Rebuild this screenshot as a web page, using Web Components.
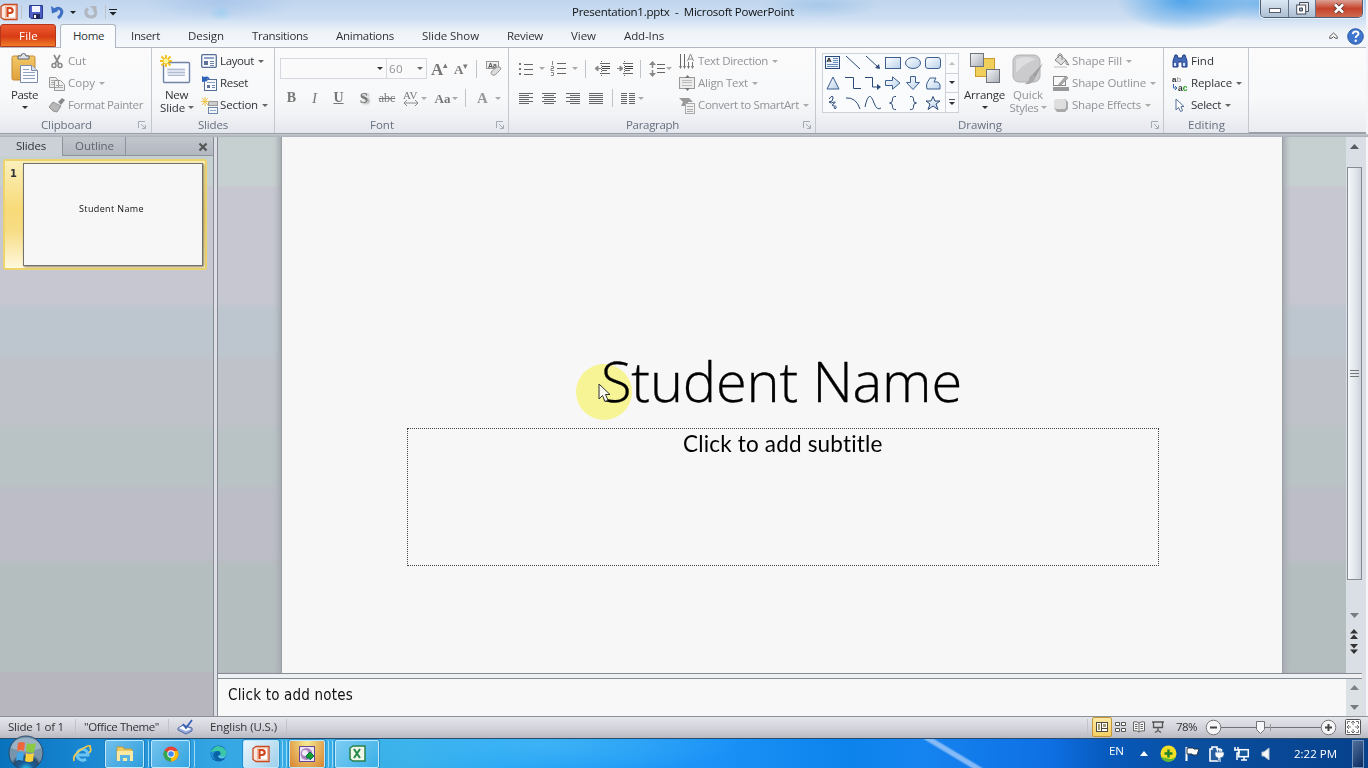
<!DOCTYPE html>
<html lang="en"><head><meta charset="utf-8"><title>Presentation1.pptx - Microsoft PowerPoint</title>
<style>html,body{margin:0;width:1368px;height:768px;overflow:hidden;background:#f4f5f8}body{font:11.5px/16px "Open Sans","Noto Sans",sans-serif;color:#303338}</style></head>
<body><office-app></office-app>
<script>
const base='*{box-sizing:border-box}.row{display:flex;align-items:center;flex:none}.row>*,.col>*{flex:none}.col{display:flex;flex-direction:column}';
function define(tag,css,html){customElements.define(tag,class extends HTMLElement{constructor(){super();this.attachShadow({mode:'open'}).innerHTML='<style>'+base+css+'</style>'+(typeof html==='function'?html(this):html);}});}

const grad='<defs><linearGradient id="b" x2="1" y2="1"><stop stop-color="#fff"/><stop offset="1" stop-color="#b9d2ea"/></linearGradient><linearGradient id="y" x2="0" y2="1"><stop stop-color="#f3c868"/><stop offset="1" stop-color="#e0a23c"/></linearGradient><linearGradient id="s" x2="1" y2="1"><stop stop-color="#f4f5f7"/><stop offset="1" stop-color="#a9adb5"/></linearGradient></defs>';
const lines=(x1,x2,ys,c='#666')=>ys.map(y=>`<path d="M${x1} ${y}.5H${x2}" stroke="${c}"/>`).join('');
const K='fill="none" stroke="#2c4a78"';
const icons={
ppt:[18,18,'<path d="M1 3.500L4 1.500h13v15H4l-3-2z" fill="#fbe9e0" stroke="#c8481f" stroke-width="1.300"/><path d="M5.500 3h10v12h-10z" fill="#fff" stroke="#e9a084" stroke-width=".7"/><path d="M7.500 14V5H10q2.700.2 2.700 2.500T10 10H7.500" fill="none" stroke="#d2441a" stroke-width="2.200"/>'],
save:[14,14,'<path d="M.5.5h13v13H2L.5 12z" fill="#4d5fc4" stroke="#2c3a8e"/><path d="M3 1h8v6H3z" fill="#f2f5ff"/><path d="M4 9h7v5H4z" fill="#20275c"/><path d="M5 10h2v3H5z" fill="#fff"/>'],
undo:[14,14,'<path d="M4 5c3-3.500 8-1 6.500 3.500-.7 2.200-2 3.500-3.500 4.500" fill="none" stroke="#3f6fc4" stroke-width="3"/><path d="M0 1l1 7.500L7.500 6z" fill="#3f6fc4"/>'],
redo:[14,14,'<path d="M4 3.500C0 6.500 2 12 7 12s6.500-5 2.500-8" fill="none" stroke="#b3b7bf" stroke-width="3"/><path d="M5.500 1h7v6z" fill="#b3b7bf"/>'],
qat:[8,8,'<path d="M0 1.500h8" stroke="#222"/><path d="M.5 4h7L4 7.500z" fill="#222"/>'],
paste:[28,31,'<rect x="1" y="3" width="23" height="24" rx="1.500" fill="url(#y)" stroke="#c18a38"/><path d="M7 6V3h3q0-2.500 2.500-2.500T15 3h3v3z" fill="#dfe2e6" stroke="#5d6470"/><path d="M9.500 12.500h11l6 5v12h-17z" fill="#fbfcff" stroke="#7b8ba9"/><path d="M20.500 12.500v5h6" fill="#d3deee" stroke="#7b8ba9"/>'+lines(12,18,[16],'#8fa2c2')+lines(12,24,[19,22,25],'#8fa2c2')],
cut:[16,16,'<path d="M5 2l5 9M11 2L6 11" stroke="#888" stroke-width="1.700"/><circle cx="5" cy="12.500" r="2" fill="none" stroke="#888" stroke-width="1.500"/><circle cx="11" cy="12.500" r="2" fill="none" stroke="#888" stroke-width="1.500"/>'],
copy:[16,16,'<path d="M.5 2.500h6l3 3v7h-9zM5.500 5.500h6l4 4v6h-10z" fill="#eee" stroke="#999"/>'+lines(2,5,[5,7,9],'#aaa')+lines(7,14,[10,12],'#aaa')],
brush:[16,16,'<path d="M9 5l4-4 3 2-4 5z" fill="#888"/><path d="M4 5l8 4-4 6-4-1-4-4z" fill="#b8b8b8" stroke="#929292"/>'],
newslide:[32,30,'<rect x="4.500" y="8.500" width="26" height="20" rx="1" fill="#fafbfe" stroke="#7183a6" stroke-width="1.400"/><path d="M8 14h18v7H8z" fill="#dde2ee"/>'+lines(9,26,[15,18,21],'#b3bdd0')+'<path d="M7 1v12M1 7h12M2.500 2.500l9 9M11.500 2.500l-9 9" stroke="#f2be1c" stroke-width="1.900"/><circle cx="7" cy="7" r="2.500" fill="#fff79b"/>'],
layout:[16,14,'<rect x=".7" y=".7" width="14.600" height="12.600" rx="1" fill="#f7f9fc" stroke="#566f96" stroke-width="1.300"/><path d="M3 3h10v2H3z" fill="#8da4c6"/><path d="M3 7h4v4H3z" fill="#5f7397"/>'+lines(9,13,[7,9,11],'#6f86ad')],
reset:[16,16,'<rect x="3.500" y="4.500" width="12" height="11" fill="#f7f9fc" stroke="#566f96"/>'+lines(6,14,[7],'#8da4c6')+'<path d="M6 10h3v3H6z" fill="#5f7397"/>'+lines(11,14,[10,12],'#6f86ad')+'<path d="M1 7V1l2 1q5-2 6 3-3-2-4-.5L7 6z" fill="#2d62bd"/>'],
section:[17,17,'<rect x="7.500" y="4.500" width="9" height="4" fill="#ccc" stroke="#999"/><rect x="7.500" y="10.500" width="9" height="6" fill="#f3f6fb" stroke="#6f86ad"/>'+lines(9,15,[13],'#8da4c6')+'<path d="M4 0v9M0 4.500h8M1 1l6 7M7 1L1 8" stroke="#f0c445"/>'],
clear:[18,17,'<rect x="1.500" y="1.500" width="12" height="7" fill="#eee" stroke="#999"/><text x="3" y="8" font-size="7" font-weight="700" fill="#555" font-family="Liberation Sans">Aa</text><path d="M6 12l6-5q4-1 4 2l-6 6q-4 1-4-3z" fill="#ddd" stroke="#999"/>'],
bullets:[14,14,lines(5,14,[2,7,12])+'<path d="M0 1h2v2H0zM0 6h2v2H0zM0 11h2v2H0z" fill="#777"/>'],
numbers:[15,15,lines(6,15,[2,7,12])+'<path d="M1.500 0v4M0 5.500h2.500v2H0v2h3M0 11.500h2.500v3H0" fill="none" stroke="#888"/>'],
outd:[16,15,lines(6,16,[2,12])+lines(8,16,[5,7],'#444')+lines(8,13,[9],'#666')+'<path d="M1 7.500L4 5v5zM4 7.500h3" fill="#888" stroke="#888"/><path d="M7.500 0v15" stroke="#666" stroke-dasharray="1 1"/>'],
ind:[16,15,lines(6,16,[2,12])+lines(8,16,[5,7],'#444')+lines(8,13,[9],'#666')+'<path d="M6 7.500L3 5v5zM0 7.500h3" fill="#888" stroke="#888"/><path d="M7.500 0v15" stroke="#666" stroke-dasharray="1 1"/>'],
spacing:[16,16,lines(8,16,[3,7,11])+'<path d="M3.500 1v6M3.500 9v6" stroke="#888" stroke-width="1.500"/><path d="M0 4h7L3.500 0zM0 12h7l-3.500 4z" fill="#888"/>'],
al:[14,13,lines(0,14,[1,5,9])+lines(0,10,[3,7,11])],ac:[14,13,lines(0,14,[1,5,9])+lines(2,12,[3,7,11])],ar:[14,13,lines(0,14,[1,5,9])+lines(4,14,[3,7,11])],aj:[14,13,lines(0,14,[1,3,5,7,9,11])],
cols:[14,13,lines(0,6,[1,3,5,7,9,11])+lines(8,14,[1,3,5,7,9,11])],
tdir:[16,16,'<path d="M1.500 1v14M5.500 1v14" stroke="#666"/><path d="M9.500 9v6M13.500 9v6" stroke="#777"/><path d="M8.500 8L11.500 1l3 7M9 6h5" fill="none" stroke="#888"/><path d="M0 13h3l-1.500 3zM4 13h3l-1.500 3zM8 13h3l-1.500 3zM12 13h3l-1.500 3z" fill="#777"/>'],
atext:[16,16,'<rect x=".5" y="2.500" width="15" height="11" fill="#ececec" stroke="#999"/>'+lines(3,13,[5,7,10],'#bbb')+'<path d="M6 3h5L8.500 0zM6 13h5l-2.500 3z" fill="#777"/>'],
smart:[16,17,'<path d="M0 1h10l4 4H9v4H2l2-4z" fill="#999"/><rect x="6.500" y="6.500" width="9" height="10" fill="#f1f1f1" stroke="#aaa"/>'+lines(8,14,[9,12,14],'#aaa')],
arrange:[30,30,grad+'<rect x="5.500" y="5.500" width="19" height="18" fill="#f0cf5a" stroke="#c89c30"/><rect x=".5" y=".5" width="13" height="13" fill="url(#s)" stroke="#6d727b"/><rect x="16.500" y="16.500" width="13" height="13" fill="url(#s)" stroke="#6d727b"/>'],
quick:[32,32,'<rect x="1" y="1" width="27" height="27" rx="6" fill="#cbcbce" stroke="#b2b2b5"/><path d="M4 5q8-4 20 0-12 4-20 14z" fill="#dedee0"/><path d="M31 9L20 21l3 3z" fill="#a0a0a0"/><path d="M20 21q-3 1-3 5l-4 4q8 1 10-6z" fill="#aaa"/>'],
fill:[16,16,'<path d="M7 2l6 5-5 5-6-5z" fill="#ddd" stroke="#888"/><path d="M5 5V2q2-3 4 0v5M13 7l3 5-3-1z" fill="none" stroke="#888"/><path d="M1 13h13v2H1z" fill="#ddd"/>'],
outline:[16,16,'<rect x=".5" y="1.500" width="12" height="9" fill="none" stroke="#888"/><path d="M6 9l7-8 2 2-7 7-3 1z" fill="#aaa" stroke="#888" stroke-width=".6"/><path d="M0 12h16v4H0z" fill="#999"/>'],
effects:[16,16,'<path d="M3 2h9l3 3v7l-3 3H4l-3-4z" fill="#aaa"/><rect x="1" y="2" width="12" height="10" rx="2.500" fill="#dedede"/>'],
find:[16,14,'<path d="M3 1h2l1 3h4l1-3h2l2 6v6h-5V8H6v5H1V7z" fill="#456ab5" stroke="#243e86"/><path d="M2 9h2v3H2zM11 9h2v3h-2z" fill="#dbe7ff"/>'],
replace:[17,18,'<text x="0" y="8" font-family="Liberation Sans" font-weight="700" font-size="8" fill="#333">a<tspan fill="#aaa">b</tspan></text><text x="6" y="17" font-family="Liberation Sans" font-weight="700" font-size="8.500" fill="#333">a<tspan fill="#25a025">c</tspan></text><path d="M1.500 10v4h3M3 12l2 2-2 2" fill="none" stroke="#3865ad"/>'],
select:[10,15,'<path d="M1 1v11l2.500-2.500 2 4 2-.8L6 8.500h3z" fill="#fff" stroke="#56709c"/>'],
launch:[8,8,'<path d="M.5 7V.5H7M3 3l4 4M7.500 4v3.500H4" fill="none" stroke="#a3abb5"/>'],
ie:[20,20,'<path d="M5 11h11a5.500 5.500 0 1 0-2 4" fill="none" stroke="#6cc4f2" stroke-width="3"/><path d="M2 17Q0 11 10 5T18 4q2 2-1 5" fill="none" stroke="#f2c94b" stroke-width="1.700"/>'],
folder:[18,16,'<path d="M1 3V1h6l1 2h8v11H1z" fill="#eecb60" stroke="#c19d3e"/><path d="M1 5h16v10H1z" fill="#fae9a2"/><path d="M4 15V9h10v6h-3v-3H7v3z" fill="#57b4e5"/>'],
chrome:[16,16,'<circle cx="8" cy="8" r="7.500" fill="#e94335"/><path d="M8 8L1.500 4.200A7.500 7.500 0 0 0 8 15.500z" fill="#34a853"/><path d="M8 15.500A7.500 7.500 0 0 0 14.800 5H8z" fill="#fbbc05"/><circle cx="8" cy="8" r="3.700" fill="#fff"/><circle cx="8" cy="8" r="2.800" fill="#4285f4"/>'],
edge:[17,17,'<circle cx="8.500" cy="8.500" r="8" fill="#0b62a5"/><path d="M1 6Q6-2 13 2.500q5 4 3 8-4 3-6 0 2-5-3-4.500Q3 6 2 10z" fill="#3ac7a8"/><path d="M7 6Q0 9 6 15 0 13 1 7z" fill="#1f91d6"/><path d="M10 10.500q3 2 6 0-1 3-4 3-4 0-4-3z" fill="#56c5ef"/>'],
cam:[16,16,'<rect x=".5" y=".5" width="15" height="15" fill="#ece7f4" stroke="#684795"/><circle cx="7.500" cy="8" r="6" fill="#ad83bd"/><circle cx="6" cy="7" r="3" fill="#f1ebf8"/><path d="M7 10l4-4 4 4-4 4v-2H8z" fill="#15a024" stroke="#075"/>'],
excel:[17,17,'<path d="M1 3l3-2h12v15H4l-3-2z" fill="#eef7e8" stroke="#26834a" stroke-width="1.500"/><path d="M5 4l6 9M11 4l-6 9" stroke="#27884b" stroke-width="2"/>'],
orb:[36,36,'<defs><radialGradient id="o" cy="1"><stop stop-color="#26d8ff"/><stop offset=".45" stop-color="#1a5d9b"/><stop offset=".8" stop-color="#294c6d"/><stop offset="1" stop-color="#7895ab"/></radialGradient></defs><circle cx="18" cy="18" r="17" fill="url(#o)" stroke="#28496a"/><path d="M3 13Q5 3 18 3t15 10Q18 20 3 13z" fill="#c2d7e4" opacity=".45"/><path d="M10 8q4-2 7 0l-1 8q-3-2-7 0z" fill="#ef663d"/><path d="M19 8q4 2 9 0l-2 9q-4 2-8-1z" fill="#8bc940"/><path d="M9 18q3-2 7 0l-1 8q-4-2-7 0z" fill="#43a7e8"/><path d="M18 18q4 2 8 0l-1 8q-4 2-8 0z" fill="#fbd13c"/>'],
spell:[17,16,'<path d="M1 9l5-3 9 3v3l-6 3-8-4z" fill="#9aaede" stroke="#5066a2"/><path d="M2 9l4-2 8 3-5 2z" fill="#fff"/><path d="M6 5l3 4 6-8" fill="none" stroke="#3660b8" stroke-width="1.800"/>'],
normal:[12,10,'<rect x=".5" y=".5" width="11" height="9" fill="#fff" stroke="#514a38"/><path d="M5.500 1v8M6 6.500h5" stroke="#514a38"/><path d="M7 2h3v3H7zM2 2h2v6H2z" fill="#a99a70"/>'],
sorter:[11,10,'<path d="M.5.5h4v3h-4zM6.500.5h4v3h-4zM.5 6.500h4v3h-4zM6.500 6.500h4v3h-4z" fill="#fff" stroke="#555"/>'],
book:[12,12,'<path d="M6 2Q3 0 .5 1v9q3-1 5.500 1 3-2 5.500-1V1Q9 0 6 2zv9M2 3.500h2.500M2 5.500h2.500M2 7.500h2.500M7.500 3.500H10M7.500 5.500H10M7.500 7.500H10" fill="#f8f8f8" stroke="#666"/>'],
show:[12,12,'<path d="M0 1h12M1.500 1v5.500h9V1M6 7v3M3 11.500l3-2 3 2" fill="none" stroke="#555" stroke-width="1.300"/>'],
minus:[17,17,'<circle cx="8.500" cy="8.500" r="7.300" fill="#f6f6f8" stroke="#777"/><path d="M5 8.500h7" stroke="#444" stroke-width="2"/>'],
plus:[17,17,'<circle cx="8.500" cy="8.500" r="7.300" fill="#f6f6f8" stroke="#777"/><path d="M5 8.500h7M8.500 5v7" stroke="#444" stroke-width="2"/>'],
fit:[16,16,'<rect x=".5" y=".5" width="15" height="15" rx="1" fill="#fff" stroke="#555"/><path d="M8 2v4M6 4l2-2 2 2M8 14v-4M6 12l2 2 2-2M2 8h4M4 6L2 8l2 2M14 8h-4M12 6l2 2-2 2M2.500 5V2.500H5M11 2.500h2.500V5M2.500 11v2.500H5M13.500 11v2.500H11" fill="none" stroke="#555" stroke-width=".8"/>'],
slider:[101,16,'<path d="M0 8.500h101" stroke="#6e7278"/><path d="M49.500 5v7" stroke="#999"/><path d="M35.500 2.500h8v8l-4 4-4-4z" fill="#f7f7fa" stroke="#71757b"/>'],
tri:[8,5,'<path d="M4 0l4 5H0z" fill="#fff"/>'],
avast:[17,17,'<circle cx="8.500" cy="8.500" r="8" fill="#f4df25"/><path d="M1 12A8 8 0 0 0 16 11q-2 3-6 3z" fill="#5fb834"/><path d="M8.500 4.500v8M4.500 8.500h8" stroke="#25822c" stroke-width="2.500"/>'],
flag:[15,16,'<path d="M1.500 1v14" stroke="#fff" stroke-width="2"/><path d="M2 2h6l1 1h5l-2 6H8L7 8H2z" fill="#fff" stroke="#234"/>'],
battery:[15,16,'<path d="M3 3V1h5v2h3v12H1V3z" fill="#285d9e" stroke="#fff" stroke-width="1.600"/><path d="M8.500 3v3M12.500 3v3" stroke="#fff" stroke-width="1.500"/><path d="M6 6h9v3q-1 3-4 3v3H9v-3q-3-1-3-3z" fill="#fff" stroke="#285d9e" stroke-width=".7"/>'],
net:[15,15,'<rect x="4.700" y="3.700" width="9.600" height="7" fill="#17599b" stroke="#fff" stroke-width="1.500"/><path d="M7 14h6M10 11v3M1 1v3M4 1v3M0 4h5v3H3v7" fill="none" stroke="#fff" stroke-width="1.500"/>'],
vol:[9,14,'<path d="M1 5h2l5-4v12L3 9H1z" fill="#f7f7f7" stroke="#b8c4d0"/>'],
cursor:[12,20,'<path d="M1 1v15l3.500-3.500L7 18.500l3-1.300-2.500-5.700H12z" fill="#f8f8ef" stroke="#333"/>'],
close:[10,10,'<path d="M1.500 1.500l7 7M8.500 1.500l-7 7" stroke="#555" stroke-width="2.200"/>'],
up:[9,5,'<path d="M4.500 0L9 5H0z" fill="#555a63"/>'],down:[9,5,'<path d="M0 0h9L4.500 5z" fill="#777c83"/>'],
dblup:[8,10,'<path d="M4 0l4 4.500H0zM4 5.500L8 10H0z" fill="#333"/>'],dbldn:[8,10,'<path d="M0 0h8L4 4.500zM0 5.500h8L4 10z" fill="#333"/>'],
grip:[9,7,'<path d="M0 .5h9M0 3.500h9M0 6.500h9" stroke="#777"/>'],
collapse:[9,8,'<path d="M.8 4.500L4.500 1l3.700 3.500v2L6 6 4.500 4.500 3 6 .8 6.500z" fill="#fff" stroke="#555"/>'],
help:[17,17,'<circle cx="8.500" cy="8.500" r="7.800" fill="#3f76cd" stroke="#2b57a7"/><path d="M5.700 6q.5-2.600 3-2.600 2.800.1 2.800 2.400 0 1.200-1.500 2-1.300.8-1.300 2.200" fill="none" stroke="#fff" stroke-width="1.900"/><circle cx="8.700" cy="12.700" r="1.200" fill="#fff"/>'],
g0:[16,14,grad+'<rect x=".5" y=".5" width="14" height="12" fill="#eef4fb" stroke="#2c4a78"/><path d="M2 6l2-4 2 4M3 5h2" fill="none" stroke="#111"/>'+lines(8,13,[2,4,6],'#668bbb')+lines(2,13,[8,10],'#668bbb')],
g1:[16,14,`<path d="M1 0l14 13" ${K}/>`],g2:[16,14,`<path d="M1 0l12 11" ${K}/><path d="M15 13l-5-1 4-4z" fill="#2c4a78"/>`],
g3:[16,14,grad+'<rect x=".5" y="1.500" width="15" height="11" fill="url(#b)" stroke="#3d5f92"/>'],g4:[16,14,grad+'<ellipse cx="8" cy="7" rx="7.500" ry="5.500" fill="url(#b)" stroke="#3d5f92"/>'],g5:[16,14,grad+'<rect x=".5" y="1.500" width="15" height="11" rx="2.500" fill="url(#b)" stroke="#3d5f92"/>'],
g6:[16,14,grad+'<path d="M8 1l6 12H2z" fill="url(#b)" stroke="#3d5f92"/>'],g7:[16,14,`<path d="M0 1.500h8.500v11H16" ${K}/>`],g8:[16,14,`<path d="M0 1.500h7.500v9.500H13" ${K}/><path d="M16 11l-4-3v6z" fill="#2c4a78"/>`],
g9:[16,14,grad+'<path d="M.5 4.500h7V.8L15 7l-7.500 6.200V9.500h-7z" fill="url(#b)" stroke="#3d5f92"/>'],g10:[16,14,grad+'<path d="M5.500.5h5v6h4L8 13.500 1.500 6.500h4z" fill="url(#b)" stroke="#3d5f92"/>'],g11:[16,14,grad+'<path d="M2 7l3-5h6l-2 4q5-1 6 3v4H2Q1 10 2 7z" fill="url(#b)" stroke="#3d5f92"/>'],
g12:[16,14,`<path d="M4 3q4-5 4-1T4 6q2 2 5 0 3 0-1 2-2 2 1 2 4 0 1 3l-1-2" ${K}/>`],g13:[16,14,`<path d="M1 2q10-1 14 11" ${K}/>`],g14:[16,14,`<path d="M0 11Q4-8 9 7q3 8 7 5" ${K}/>`],
g15:[16,14,`<path d="M11 .5Q7 0 7.500 4q0 3-3 3 3 0 3 3-.5 4 3.500 3.500" ${K}/>`],g16:[16,14,`<path d="M5 .5Q9 0 8.500 4q0 3 3 3-3 0-3 3 .5 4-3.500 3.500" ${K}/>`],g17:[16,14,grad+'<path d="M8 .5l2 4.500h5l-4 3 2 5.500-5-3.500-5 3.500 2-5.500-4-3h5z" fill="url(#b)" stroke="#2c4a78"/>'],
wmin:[12,6,'<rect x=".5" y=".5" width="11" height="4" fill="#fff" stroke="#555b68"/>'],
wmax:[13,13,'<path d="M3.500 3V.5h9v9H10" fill="#eee" stroke="#444c5b"/><rect x=".7" y="3" width="9" height="9" fill="#fff" stroke="#444c5b"/><path d="M3.500 6h3v3h-3z" fill="#9ab" stroke="#444c5b"/>'],
wclose:[13,12,'<path d="M2 1.500l8 8M10 1.500l-8 8" stroke="#5b3434" stroke-width="4.500"/><path d="M2 1.500l8 8M10 1.500l-8 8" stroke="#fff" stroke-width="2.600"/>']};
define('app-icon',':host{display:block;flex:none;line-height:0}svg{display:block;overflow:visible}',h=>{const n=h.getAttribute('n'),[w,ht,c]=icons[n];return `<svg width="${w}" height="${ht}" viewBox="0 0 ${w} ${ht}">${/url\(#[bys]\)/.test(c)&&!c.includes('<defs')?grad:''}${c}</svg>`;});
define('drop-arrow',':host{display:block;width:5px;height:3px;flex:none}i{display:block;border:solid transparent;border-width:3px 3px 0;border-top-color:currentColor;width:0;margin-left:-.5px}','<i></i>');
/* Label that spreads its letters over a fixed width. */
customElements.define('fit-text',class extends HTMLElement{
 constructor(){super();this.attachShadow({mode:'open'}).innerHTML='<style>:host{display:block;flex:none;width:max-content;white-space:nowrap}</style><slot></slot>';}
 connectedCallback(){const w=+this.getAttribute('w');this.style.letterSpacing='0px';const n=this.getBoundingClientRect().width;this.style.letterSpacing=((w-n)/this.textContent.length)+'px';this.style.width=w+'px';}
});
const ic=n=>`<app-icon n="${n}"></app-icon>`,icw=n=>icons[n][0];
const T=(x,w,s,st='')=>[x,w,`<fit-text w="${w}" style="${st}">${s}</fit-text>`];
const I=(x,n)=>[x,icw(n),ic(n)];
const A=(x,c='#666')=>[x,5,`<drop-arrow style="color:${c}"></drop-arrow>`];
const S=(x,h=18)=>[x,1,`<i style="display:block;width:1px;height:${h}px;background:#c0c3ca"></i>`];
/* Lays items out in a flex row; each gap is the distance to the item before it. */
function R(x0,h,items,st=''){let at=x0;return `<div class="row" style="height:${h}px;${st}">`+items.map(([x,w,s])=>{const g=x-at;at=x+w;return `<div style="width:${w}px;margin-left:${g}px">${s}</div>`;}).join('')+'</div>';}
const G='color:#929397',GA='#aaa';

define('title-bar',':host{display:block;height:24px;color:#111}.w{display:flex;height:18px;width:103px;border:1px solid #4c5f79;border-top:0;border-radius:0 0 5px 5px;overflow:hidden;box-shadow:0 0 0 1px #fff9}.w div{display:grid;place-items:center;background:linear-gradient(#dce8f4,#aebfd3);border-right:1px solid #65768b}.w div:nth-child(1){width:28px;padding-top:4px}.w div:nth-child(2){width:27px}.w div:nth-child(3){flex:1;border:0;background:linear-gradient(#dca095,#c6432b 50%,#cf6a50)}',
 R(0,24,[I(0,'ppt'),S(21,14),I(29,'save'),I(51,'undo'),A(70,'#222'),I(84,'redo'),S(105,14),I(109,'qat'),T(572,222,'Presentation1.pptx&nbsp; -&nbsp; Microsoft PowerPoint'),[1260,103,`<section class="w" style="margin-top:-6px"><div>${ic('wmin')}</div><div>${ic('wmax')}</div><div>${ic('wclose')}</div></section>`]]));
define('tab-strip',':host{display:flex;height:24px;align-items:flex-start}.file{width:56px;height:23px;background:linear-gradient(#ec5c32,#d83c16 55%,#f07c28);border:1px solid #b4371a;border-radius:3px 3px 0 0;color:#fff;padding:3px 0 0 18px}.home{margin-left:4px;width:56px;height:24px;background:#fafbfc;border:1px solid #aeb5bf;border-bottom:0;border-radius:3px 3px 0 0;padding:3px 0 0 12px;position:relative;z-index:1}',
 '<div class="file"><fit-text w="19">File</fit-text></div><div class="home"><fit-text w="31">Home</fit-text></div>'+R(116,24,[T(131,29,'Insert'),T(188,36,'Design'),T(252,56,'Transitions'),T(336,58,'Animations'),T(422,57,'Slide Show'),T(507,36,'Review'),T(571,25,'View'),T(624,40,'Add-Ins'),I(1329,'collapse'),I(1347,'help')]));
define('ribbon-group',':host{display:block;flex:none;height:85px;border-right:1px solid #c3c7ce;position:relative}.b{height:69px;padding-top:2px;display:flex;align-items:flex-start}.l{height:16px;color:#66707e;background:linear-gradient(#eff1f300,#e6e8ef)}',
 h=>{const [x,lx,lw,la]=h.getAttribute('geo').split(',').map(Number);return `<div class="b"><slot></slot></div><div class="l">${R(x,16,[T(lx,lw,h.getAttribute('label')),...(la?[I(la,'launch')]:[])])}</div>`;});
const fnt=(s,w=15,z=14,st='')=>`<span style="display:block;width:${w}px;text-align:center;font:bold ${z}px/18px 'Liberation Serif',serif;color:#777;white-space:nowrap;${st}">${s}</span>`;
const gallery='<div class="gal"><div class="shapes">'+[...Array(18)].map((_,i)=>ic('g'+i)).join('')+'</div><div class="sc"><div><drop-arrow style="color:#bbb;transform:scaleY(-1)"></drop-arrow></div><div><drop-arrow></drop-arrow></div><div><b></b><drop-arrow></drop-arrow></div></div></div>';
define('office-ribbon',`:host{display:flex;height:87px;width:1366px;background:linear-gradient(#fbfbfc,#f7f8f9 60%,#eaecf1);border-top:1px solid #b1b7c0;border-bottom:2px solid #9a9fa8}
.big{display:flex;flex-direction:column;align-items:center;flex:none}.big>*{flex:none}.box{height:21px;border:1px solid #d5d8df;background:#fafafb}.gal{display:flex;width:137px;height:60px;margin-top:3px;border:1px solid #cdd2da;background:#fafbfc}.shapes{width:122px;display:grid;grid-template-columns:repeat(6,20px);grid-template-rows:repeat(3,20px);place-items:center;margin-top:-1px}.sc{flex:1;border-left:1px solid #cdd2da}.sc div{height:19.5px;display:grid;place-content:center;border-bottom:1px solid #cdd2da}.sc b{width:6px;height:1px;background:#555;margin-bottom:2px}`,
`<ribbon-group style="width:152px" geo="0,41,51,138" label="Clipboard"><div class="big" style="width:49px;padding-top:3px"><app-icon n="paste"></app-icon><fit-text w="27" style="margin-top:3px">Paste</fit-text><drop-arrow style="margin-top:3px"></drop-arrow></div><div class="col" style="${G}">${R(49,22,[I(49,'cut'),T(68,18,'Cut')])}${R(49,22,[I(49,'copy'),T(68,27,'Copy'),A(99,GA)])}${R(49,22,[I(49,'brush'),T(68,75,'Format Painter')])}</div></ribbon-group>
<ribbon-group style="width:123px" geo="152,198,30" label="Slides"><div class="big" style="width:49px;padding-top:4px"><app-icon n="newslide" style="margin-left:-4px"></app-icon><fit-text w="23" style="margin-top:3px">New</fit-text>${R(152,13,[T(160,25,'Slide'),A(188)],'margin-top:-2px;width:49px')}</div><div class="col">${R(201,22,[I(201,'layout'),T(220,34,'Layout'),A(258)])}${R(201,22,[I(201,'reset'),T(220,28,'Reset')])}${R(201,22,[I(201,'section'),T(220,38,'Section'),A(262)])}</div></ribbon-group>
<ribbon-group style="width:234px" geo="275,370,24,496" label="Font"><div class="col">${R(275,37,[[280,107,`<div class="box" style="padding:8px 0 0 96px"><drop-arrow></drop-arrow></div>`],[386,41,`<div class="box row" style="${G}"><fit-text w="14" style="margin-left:2px">60</fit-text><drop-arrow style="color:#666;margin-left:14px"></drop-arrow></div>`],[431,17,fnt('A<sup style="font:9px/0 sans-serif;vertical-align:7px">▴</sup>',17,17,'margin-top:2px')],[454,14,fnt('A<sup style="font:9px/0 sans-serif;vertical-align:5px">▾</sup>',14,13,'margin-top:2px')],S(476),I(485,'clear')])}${R(275,22,[[286,11,fnt('B',11)],[309,11,fnt('I',11,15,'font-style:italic;font-weight:400')],[333,11,fnt('U',11,14,'text-decoration:underline')],[358,12,fnt('S',12,15,'text-shadow:2px 1px 2px #999')],[378,18,fnt('abc',18,12,'text-decoration:line-through;font-weight:400')],[403,17,'<div style="height:16px;font:11px/10px Liberation Serif;color:#777">AV<svg width="16" height="6" style="display:block"><path d="M1 3h14M4 0L1 3l3 3M12 0l3 3-3 3" fill="none" stroke="#888"/></svg></div>'],A(421,GA),[434,17,fnt('Aa',17,13,'margin-top:2px')],A(452,GA),S(465),[476,13,fnt('A',13,15,'color:#999;margin-top:-1px')],A(495,GA)])}</div></ribbon-group>
<ribbon-group style="width:307px" geo="509,626,53,803" label="Paragraph"><div class="col" style="width:170px">${R(509,37,[I(519,'bullets'),A(539,GA),I(551,'numbers'),A(572,GA),S(585),I(594,'outd'),I(617,'ind'),S(640),I(649,'spacing'),A(666,GA)])}${R(509,22,[I(519,'al'),I(542,'ac'),I(566,'ar'),I(589,'aj'),S(612),I(621,'cols'),A(638,GA)])}</div><div class="col" style="${G}">${R(679,22,[I(679,'tdir'),T(698,70,'Text Direction'),A(772,GA)])}${R(679,22,[I(679,'atext'),T(698,50,'Align Text'),A(752,GA)])}${R(679,22,[I(679,'smart'),T(698,101,'Convert to SmartArt'),A(803,GA)])}</div></ribbon-group>
<ribbon-group style="width:348px" geo="816,958,44,1151" label="Drawing"><div style="padding-left:6px;flex:none">${gallery}</div><div class="big" style="width:51px;padding-top:3px"><app-icon n="arrange"></app-icon><fit-text w="41" style="margin-top:4px">Arrange</fit-text><drop-arrow style="margin-top:3px"></drop-arrow></div><div class="big" style="width:36px;padding-top:4px;${G}"><app-icon n="quick"></app-icon><fit-text w="30" style="margin-top:1px">Quick</fit-text>${R(1010,13,[T(1010,29,'Styles'),A(1042,GA)],'margin-top:-2px')}</div><div class="col" style="margin-left:7px;${G}">${R(1053,22,[I(1053,'fill'),T(1072,50,'Shape Fill'),A(1126,GA)])}${R(1053,22,[I(1053,'outline'),T(1072,74,'Shape Outline'),A(1150,GA)])}${R(1053,22,[I(1053,'effects'),T(1072,69,'Shape Effects'),A(1145,GA)])}</div></ribbon-group>
<ribbon-group style="width:85px" geo="1164,1188,37" label="Editing"><div class="col">${R(1164,22,[I(1172,'find'),T(1191,23,'Find')])}${R(1164,22,[I(1172,'replace'),T(1191,41,'Replace'),A(1236)])}${R(1164,22,[I(1175,'select'),T(1191,30,'Select'),A(1225)])}</div></ribbon-group>`);
const bands='background:linear-gradient(#c7d0d0 0 48px,#c6c7d0 50px 165px,#bdc6ce 172px 215px,#c0c2ca 225px 285px,#b9c3c5 295px 345px,#bcbdc6 355px 420px,#b5bebf 430px 534px,#b7b6bf 536px);';
define('slide-panel',`:host{display:block;width:214px;flex:none;border-right:1px solid #858c94;${bands}}.tabs{display:flex;height:19px;background:linear-gradient(#c2c7ce,#b3b7c0);border-bottom:1px solid #8d949d;width:213px;line-height:18px}.tabs .a{width:62px;height:19px;background:#cbd1d6;padding-left:16px}.tabs .o{width:64px;border:solid #8d949d;border-width:0 1px;padding-left:12px;color:#61656b}.tabs app-icon{margin:5px 0 0 72px}.card{margin:3px 0 0 3px;width:204px;height:111px;border:2px solid #ecd36b;border-radius:3px;background:linear-gradient(#faf0bc,#f8da78 45%,#f6dc84 65%,#fff9dd);display:flex;padding:3px 0 0 5px}.card b{width:13px;font:bold 11px/20px "DejaVu Sans Condensed","DejaVu Sans",sans-serif}.thumb{width:180px;height:103px;margin-top:-1px;background:#f7f7f7;border:1px solid #73716b;box-shadow:1px 1px 2px #8a825e;padding:38px 0 0 55px;font-size:9px;line-height:14px;color:#111}`,
 '<div class="tabs"><div class="a"><fit-text w="30">Slides</fit-text></div><div class="o"><fit-text w="39">Outline</fit-text></div><app-icon n="close"></app-icon></div><div class="card"><b>1</b><div class="thumb"><fit-text w="65">Student Name</fit-text></div></div>');
define('slide-canvas',`:host{display:flex;height:537px;border-bottom:1px solid #858c94;${bands}}.slide{margin-left:64px;width:1000px;height:536px;background:#f7f7f7;box-shadow:0 0 0 1px #9ba1a3,0 0 5px 4px #a6abb1;clip-path:inset(0 -12px 0 -12px);padding-top:206px;color:#000;flex:none}.t{margin-left:319px;font:300 56px/74px "Open Sans","Noto Sans",sans-serif;-webkit-text-stroke:.3px #000}.sub{margin:11px 0 0 125px;width:752px;height:138px;border:1px dotted #444;padding:0 0 0 275px;font:22.5px/29px Lato,"Open Sans",sans-serif}.ptr{position:absolute;left:576px;top:364px;width:56px;height:56px;border-radius:50%;background:#fffc9b;mix-blend-mode:multiply}.cur{position:absolute;left:598px;top:383px}.sb{width:16px;margin-left:64px;background:#d9dfe5;display:flex;flex-direction:column;align-items:center}.th{width:15px;height:413px;margin-top:18px;border:1px solid #858b92;background:linear-gradient(90deg,#f6f8fa,#dfe5ea 60%,#cdd1db);display:grid;place-items:center}`,
 '<div class="slide"><div class="t"><fit-text w="361">Student Name</fit-text></div><div class="sub"><fit-text w="200">Click to add subtitle</fit-text></div></div><div class="sb"><app-icon n="up" style="margin-top:7px"></app-icon><div class="th"><app-icon n="grip"></app-icon></div><app-icon n="down" style="margin-top:33px"></app-icon><app-icon n="dblup" style="margin-top:11px"></app-icon><app-icon n="dbldn" style="margin-top:5px"></app-icon></div><div class="ptr"></div><div class="cur"><app-icon n="cursor"></app-icon></div>');
define('notes-pane',':host{display:flex;height:38px;margin-top:4px;border-top:1px solid #858c94;background:#f8f8f8;color:#111;font:15px/20px "DejaVu Sans Condensed","Noto Sans",sans-serif}.n{padding:6px 0 0 10px;width:1128px}.s{width:16px;background:#dce1e6;display:flex;flex-direction:column;justify-content:space-between;align-items:center;padding:6px 0 6px}',
 '<div class="n"><fit-text w="125">Click to add notes</fit-text></div><div class="s"><app-icon n="up" style="opacity:.7"></app-icon><app-icon n="down"></app-icon></div>');
define('work-area',':host{display:flex;height:579px;width:1366px;background:#dcdde5}.e{width:1145px;margin-left:3px;border-left:1px solid #858c94;background:#eef0f4}','<slide-panel></slide-panel><div class="e"><slide-canvas></slide-canvas><notes-pane></notes-pane></div>');
define('status-bar',':host{box-sizing:border-box;display:block;height:23px;border-top:1px solid #8b9399;background:linear-gradient(#e6e7ec,#cfd0d8 60%,#b9b9c2);border-bottom:1px solid #2a4a6b}.v{width:20px;height:20px;border:1px solid #c49735;border-radius:2px;background:linear-gradient(#fbe9a7,#f6cf63);display:grid;place-items:center}',
 R(0,20,[T(8,56,'Slide 1 of 1'),S(75,17),T(84,75,'"Office Theme"'),S(168,17),I(177,'spell'),T(210,67,'English (U.S.)'),S(286,17),S(1087,17),[1092,20,'<div class="v"><app-icon n="normal"></app-icon></div>'],I(1115,'sorter'),I(1133,'book'),I(1152,'show'),T(1176,21,'78%'),I(1205,'minus'),[1221,101,ic('slider')],I(1320,'plus'),I(1345,'fit')]));
const tb=(x,w,n,cls='')=>[x,w,`<div class="tb ${cls}">${ic(n)}</div>`],st=x=>[x,4,'<div class="st"></div>'];
define('task-bar',':host{display:block;height:29px;background:radial-gradient(ellipse 200px 30px at 540px 5px,#49b9f5aa,#49b9f500),linear-gradient(90deg,#0872bd,#1683cf 70px,#36a9e5 230px,#3ab2e9 410px,#28a8f5 500px,#1a91f7 720px,#0c83ea 850px,#1584f0 920px,#0e6fe3 1050px,#0759bb 1110px,#0a4e9e 1200px,#06418c);color:#fff}.wrap{display:flex;background:linear-gradient(31deg,#fff0 45%,#a9cefac0 48% 52%,#fff0 55%) 903px 0/100px 29px no-repeat}.tb{height:28px;border:1px solid #bce9ff;border-radius:2px;background:linear-gradient(130deg,#a9e1fa99,#3caee366);box-shadow:0 0 0 1px #176da777;display:grid;place-items:center}.act{background:linear-gradient(130deg,#edf6fb,#9dcfeb)}.or{background:radial-gradient(at 50% 0,#f9ed94,#d78330)}.st{width:4px;height:28px;border:solid #9bd9f6;border-width:0 1px 0 0;border-radius:0 2px 2px 0}.desk{width:12px;height:28px;border:1px solid #7595bd;background:linear-gradient(130deg,#526f9b,#082b61)}',
 '<div class="wrap">'+R(0,29,[[8,36,'<div style="margin:-7px 0 -5px">'+ic('orb')+'</div>'],I(72,'ie'),tb(105,39,'folder'),st(145),tb(151,39,'chrome'),st(191),I(210,'edge'),tb(243,36,'ppt','act'),st(279),st(283),tb(289,36,'cam','or'),st(325),st(329),tb(335,44,'excel'),[1109,15,'<fit-text w="15" style="margin-top:-6px">EN</fit-text>'],I(1140,'tri'),I(1160,'avast'),I(1185,'flag'),I(1209,'battery'),I(1234,'net'),I(1261,'vol'),T(1294,43,'2:22 PM'),[1352,12,'<div class="desk"></div>']])+'</div>');
define('office-app',':host{display:block;width:1368px;height:768px}.head{width:1366px;background:radial-gradient(ellipse 65px 32px at 1182px 0,#429ee9dd,#62a8ec00),radial-gradient(ellipse 120px 18px at 1275px 3px,#70b2eb,#9ccaf000),radial-gradient(ellipse 12px 8px at 221px 13px,#91ccef99,#fff0),radial-gradient(ellipse 60px 13px at 820px 5px,#8dbae488,#fff0),radial-gradient(ellipse 80px 18px at 220px 2px,#9fbfe9aa,#fff0),linear-gradient(#c1d6ee,#ccdef2 18px,#edf2f8 31px,#f6f8fb 47px)}office-ribbon{box-sizing:border-box}',
 '<div class="head"><title-bar></title-bar><tab-strip></tab-strip></div><office-ribbon style="margin-top:-1px"></office-ribbon><div style="height:3px;background:linear-gradient(#c5c9d0,#aab0b8)"></div><work-area></work-area><status-bar></status-bar><task-bar></task-bar>');
</script></body></html>
